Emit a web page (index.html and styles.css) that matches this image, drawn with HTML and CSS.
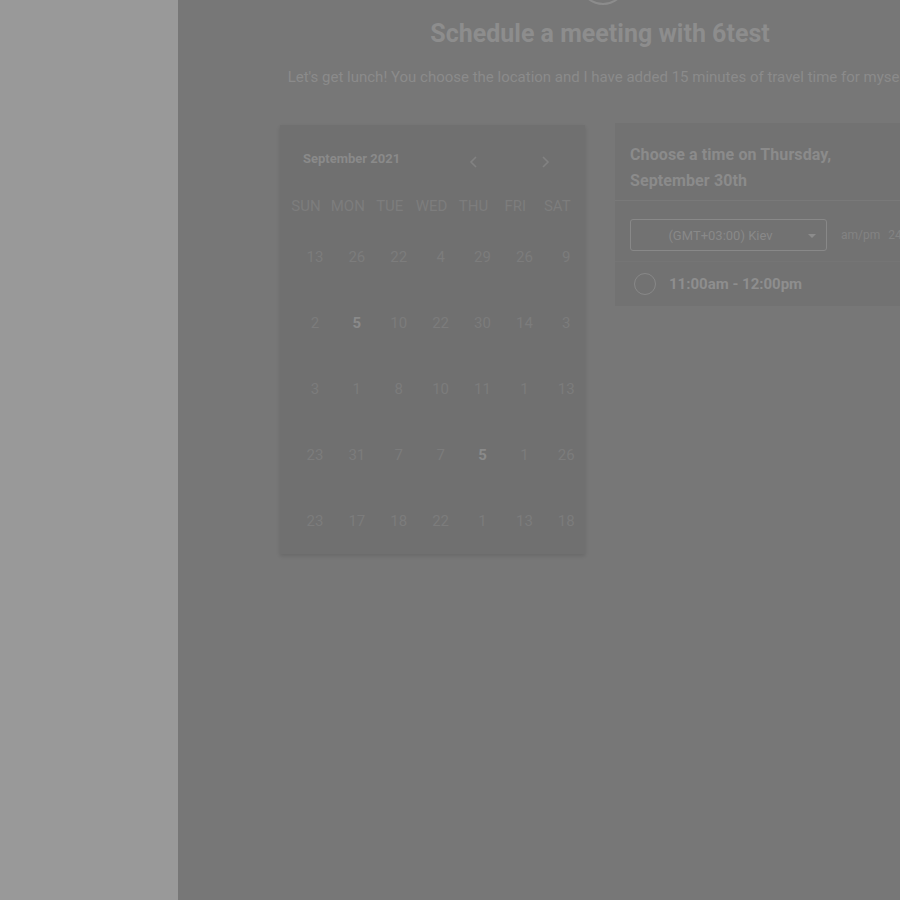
FILE: index.html
```html
<!DOCTYPE html>
<html lang="en">
<head>
<meta charset="utf-8">
<title>Schedule a meeting with 6test</title>
<link rel="stylesheet" href="styles.css">
</head>
<body>
<div class="app">
  <aside class="sidebar"></aside>
  <main class="main">
    <div class="content">
      <div class="avatar"></div>
      <h1 class="title">Schedule a meeting with 6test</h1>
      <p class="subtitle">Let's get lunch! You choose the location and I have added 15 minutes of travel time for myself.</p>
      <div class="cards">
        <section class="calendar">
          <div class="cal-head">
            <span class="month">September 2021</span>
            <div class="arrows">
              <svg class="arrow" width="10" height="14" viewBox="0 0 10 14"><path d="M7 2 L2 7 L7 12" fill="none" stroke="currentColor" stroke-width="1.6"/></svg>
              <svg class="arrow" width="10" height="14" viewBox="0 0 10 14"><path d="M3 2 L8 7 L3 12" fill="none" stroke="currentColor" stroke-width="1.6"/></svg>
            </div>
          </div>
          <div class="weekdays">
            <span>SUN</span><span>MON</span><span>TUE</span><span>WED</span><span>THU</span><span>FRI</span><span>SAT</span>
          </div>
          <div class="days">
            <span>13</span><span>26</span><span>22</span><span>4</span><span>29</span><span>26</span><span>9</span>
            <span>2</span><span class="on">5</span><span>10</span><span>22</span><span>30</span><span>14</span><span>3</span>
            <span>3</span><span>1</span><span>8</span><span>10</span><span>11</span><span>1</span><span>13</span>
            <span>23</span><span>31</span><span>7</span><span>7</span><span class="on">5</span><span>1</span><span>26</span>
            <span>23</span><span>17</span><span>18</span><span>22</span><span>1</span><span>13</span><span>18</span>
          </div>
        </section>
        <section class="times">
          <div class="times-head">Choose a time on Thursday, September 30th</div>
          <div class="tz-row">
            <div class="select">
              <span>(GMT+03:00) Kiev</span>
              <svg class="caret" width="8" height="5" viewBox="0 0 8 5"><path d="M0 0 L8 0 L4 4 Z" fill="currentColor"/></svg>
            </div>
            <span class="fmt">am/pm</span><span class="fmt">24h</span>
          </div>
          <div class="slot">
            <span class="radio"></span>
            <span class="slot-text">11:00am - 12:00pm</span>
          </div>
        </section>
      </div>
    </div>
  </main>
</div>
</body>
</html>
```

FILE: styles.css
```css
* { box-sizing: border-box; }
html, body { margin: 0; padding: 0; height: 100%; }
body { font-family: Roboto, "Liberation Sans", sans-serif; background: #777777; overflow: hidden; }
.app { display: flex; height: 900px; }
.sidebar { width: 178px; flex: none; background: #999999; }
.main { flex: 1; background: #777777; overflow: hidden; }
.content { width: 640px; margin-left: 102px; text-align: center; }
.avatar { width: 48px; height: 48px; margin: -43px auto 0; border-radius: 50%; border: 2px solid #8c8c8c; position: relative; left: 3px; }
.title { margin: 14px 0 0; font-size: 25px; line-height: 30px; font-weight: 700; color: #8d8d8d; }
.subtitle { margin: 18px 0 0; font-size: 15px; line-height: 20px; color: #8b8b8b; white-space: nowrap; letter-spacing: 0; }
.cards { display: flex; gap: 30px; margin-top: 36px; text-align: left; align-items: flex-start; }
.calendar { width: 305px; flex: none; margin-top: 2px; background: #707070; box-shadow: 0 2px 4px rgba(0,0,0,0.12); padding-top: 17px; }
.cal-head { display: flex; align-items: center; height: 32px; padding-left: 23px; }
.month { font-size: 13px; font-weight: 700; color: #8a8a8a; width: 166px; }
.arrows { display: flex; gap: 61px; color: #828282; position: relative; top: 4px; }
.arrow { display: block; }
.weekdays { display: grid; grid-template-columns: repeat(7, 41.9px); margin: 17px 0 0 5px; height: 30px; align-items: center; }
.weekdays span { text-align: center; font-size: 15px; color: #7d7d7d; }
.days { display: grid; grid-template-columns: repeat(7, 41.9px); grid-auto-rows: 66px; margin: 3px 0 0 14px; align-items: center; }
.days span { text-align: center; font-size: 15px; color: #7c7c7c; }
.days span.on { font-weight: 700; color: #8a8a8a; }
.times { width: 305px; flex: none; background: #727272; }
.times-head { padding: 19px 15px 6px; font-size: 16px; line-height: 26px; font-weight: 700; color: #8b8b8b; border-bottom: 1px solid #797979; letter-spacing: 0.1px; }
.tz-row { display: flex; align-items: center; padding: 18px 15px 10px; border-bottom: 1px solid #757575; }
.select { width: 197px; flex: none; height: 32px; border: 1px solid #888888; border-radius: 3px; display: flex; align-items: center; justify-content: center; position: relative; font-size: 13px; color: #898989; padding-right: 16px; }
.caret { position: absolute; right: 10px; top: 14px; color: #8c8c8c; }
.fmt { font-size: 12px; color: #838383; margin-left: 14px; white-space: nowrap; }
.fmt + .fmt { margin-left: 8px; }
.slot { display: flex; align-items: center; height: 44px; padding-left: 19px; }
.radio { width: 22px; height: 22px; border-radius: 50%; border: 1.5px solid #888888; flex: none; }
.slot-text { margin-left: 13px; font-size: 15px; font-weight: 700; color: #8e8e8e; }
```
